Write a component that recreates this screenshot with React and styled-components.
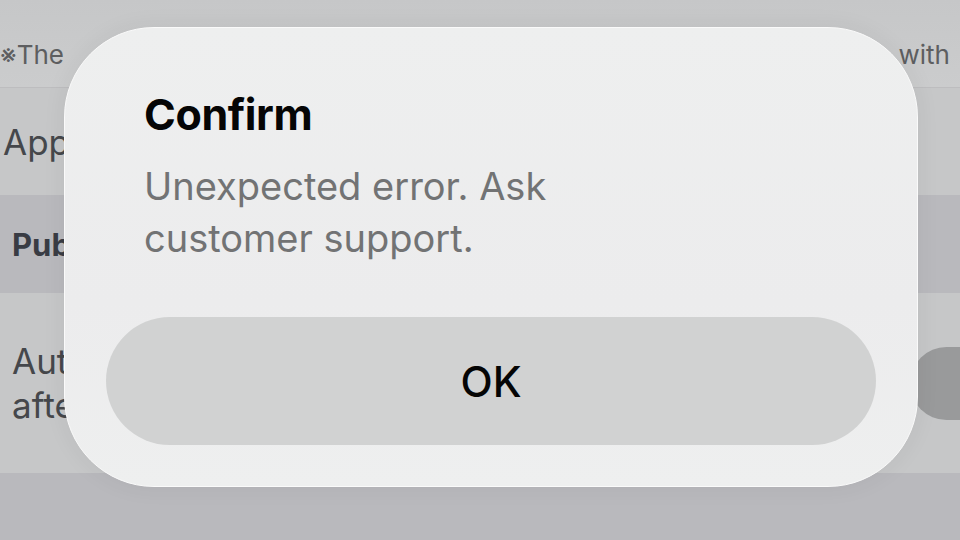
import styled, { createGlobalStyle } from "styled-components"

const GlobalStyle = createGlobalStyle`
    html, body {
        margin: 0;
        padding: 0;
        background: #b9b9bd;
        font-family: Inter, "Noto Sans", "Liberation Sans", sans-serif;
        overflow: hidden;
    }
`

export default function App() {
    return (
        <>
            <GlobalStyle />
            <Screen>
                <Note><Mark>※The</Mark> same settings are applied to all devices signed in with</Note>
                <Row height={107} inset={3}>
                    <RowLabel>Appearance</RowLabel>
                </Row>
                <Section>Publishing</Section>
                <Row height={180} inset={12}>
                    <RowLabel>Auto publish<br />after saving</RowLabel>
                    <Toggle />
                </Row>
                <Dialog role="alertdialog">
                    <Title>Confirm</Title>
                    <Message>Unexpected error. Ask<br />customer support.</Message>
                    <OkButton>OK</OkButton>
                </Dialog>
            </Screen>
        </>
    )
}

const Screen = styled.div`
    position: relative;
    width: 960px;
    height: 540px;
    background: #b9b9bd;
    display: flex;
    flex-direction: column;
    overflow: hidden;
`
const Note = styled.div`
    height: 88px;
    width: 960px;
    box-sizing: border-box;
    background: linear-gradient(180deg, #c6c7c8 0%, #cbcccd 100%);
    border-bottom: 1px solid #bdbdbf;
    padding: 38px 10px 0 0;
    font-size: 26px;
    line-height: 34px;
    white-space: nowrap;
    text-align: justify;
    text-align-last: justify;
    color: #5d5e60;
`
const Mark = styled.span`
    display: inline-block;
`
const Row = styled.div`
    height: ${p => p.height}px;
    background: #c6c7c8;
    display: flex;
    align-items: center;
    justify-content: space-between;
    padding-left: ${p => p.inset}px;
`
const RowLabel = styled.div`
    font-size: 35px;
    line-height: 44px;
    color: #45474b;
`
const Section = styled.div`
    height: 98px;
    background: #b9b9bd;
    display: flex;
    align-items: center;
    padding-left: 12px;
    font-size: 31px;
    font-weight: 700;
    color: #393c44;
`
const Toggle = styled.div`
    width: 150px;
    height: 73px;
    border-radius: 37px;
    background: #999a9b;
    margin-right: -100px;
`
const Dialog = styled.div`
    position: absolute;
    left: 64px;
    top: 27px;
    width: 854px;
    height: 460px;
    box-sizing: border-box;
    border-radius: 90px;
    background: linear-gradient(180deg, #eeefef 0%, #ececed 60%, #eeefef 100%);
    border: 1.5px solid #fafafa;
    box-shadow: 0 0 24px rgba(0, 0, 0, 0.06);
    display: flex;
    flex-direction: column;
    padding: 60px 41px 41px;
`
const Title = styled.h2`
    margin: 0 0 0 38px;
    font-size: 43px;
    line-height: 52px;
    font-weight: 700;
    color: #050505;
    letter-spacing: -0.4px;
`
const Message = styled.p`
    margin: 20px 0 0 38px;
    font-size: 38px;
    line-height: 52px;
    color: #727374;
`
const OkButton = styled.button`
    margin-top: auto;
    height: 128px;
    border: none;
    border-radius: 64px;
    background: #d1d2d2;
    font-family: inherit;
    font-size: 42px;
    font-weight: 500;
    color: #050505;
    cursor: pointer;
`
